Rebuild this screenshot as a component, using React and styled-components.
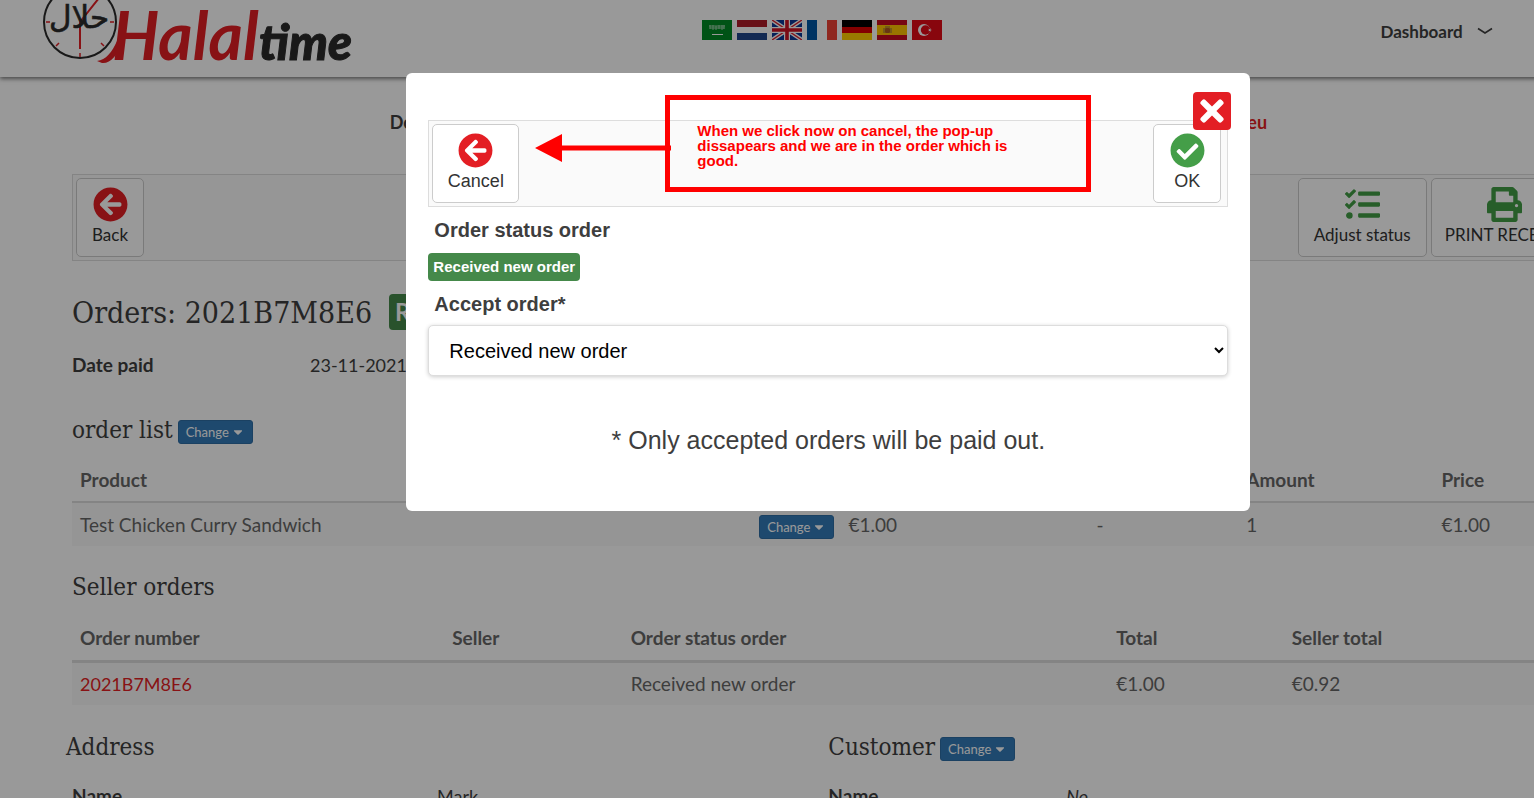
import styled, { createGlobalStyle } from "styled-components"
import { FaArrowCircleLeft, FaCaretDown, FaCheckCircle, FaPrint, FaTasks, FaTimes } from "react-icons/fa"

const GlobalStyle = createGlobalStyle`
    * {
        box-sizing: border-box;
    }
    body {
        margin: 0;
        background: #fff;
        color: #3e3e3e;
        font-family: Lato, "Open Sans", sans-serif;
        font-size: 20px;
    }
    button, select {
        font-family: inherit;
    }
`

const Viewport = styled.div`
    height: 100vh;
    overflow: hidden;
`

// the shop page is a bit wider than the window
const Page = styled.div`
    position: relative;
    width: 108%;
    min-height: 100%;
`

const Header = styled.header`
    display: grid;
    grid-template-columns: 1fr auto 1fr;
    height: 77px;
    box-shadow: 0 2px 4px rgba(0, 0, 0, 0.5);
`

const Logo = styled.a`
    display: block;
    padding-left: 40px;
    height: 77px;
    overflow: hidden;
`

const Flags = styled.div`
    display: flex;
    gap: 5px;
    padding: 20px 12px 0 0;
`

const Nav = styled.nav`
    display: flex;
    justify-content: flex-end;
    padding: 20px 164px 0 0;
`

const NavLink = styled.a`
    display: flex;
    align-items: center;
    gap: 14px;
    height: 22px;
    color: #3e3e3e;
    font-size: 17px;
    font-weight: 700;
    text-decoration: none;
`

const Main = styled.main`
    padding: 0 72px;
`

const Notice = styled.p`
    display: flex;
    justify-content: space-between;
    width: 58%;
    height: 24px;
    margin: 33px auto 40px;
    font-size: 18px;
    line-height: 24px;
    font-weight: 700;
`

const NoticeLink = styled.a`
    color: #e31e24;
    text-decoration: none;
`

const Toolbar = styled.div`
    display: flex;
    gap: 4px;
    height: 87px;
    padding: 3px 6px 3px 3px;
    border: 1px solid #ddd;
    background: #fafafa;
    font-size: ${props => props.$size || 17}px;
`

const Spacer = styled.div`
    flex: 1;
`

const ToolButton = styled.button`
    display: flex;
    flex-direction: column;
    align-items: center;
    width: ${props => props.$width || 68}px;
    height: 79px;
    padding: 8px 0 0;
    border: 1px solid #ccc;
    border-radius: 5px;
    background: #fff;
    color: #333;
    font-size: inherit;
    line-height: 26px;
    white-space: nowrap;
    svg {
        flex: none;
        font-size: 35px;
        color: ${props => props.$color};
    }
`

const Title = styled.h1`
    display: flex;
    align-items: center;
    gap: 17px;
    height: 40px;
    margin: 31px 0 0;
    font-family: "DejaVu Serif Condensed", "DejaVu Serif", serif;
    font-size: 30px;
    font-weight: 400;
`

const TitleBadge = styled.span`
    padding: 0 6px;
    border-radius: 4px;
    background: #45894a;
    color: #fff;
    font-family: Lato, sans-serif;
    font-size: 24px;
    line-height: 36px;
    font-weight: 700;
`

const Fields = styled.dl`
    display: grid;
    grid-template-columns: ${props => props.$columns};
    margin: 19px 0 0;
    line-height: 28px;
`

const Term = styled.dt`
    font-size: 19px;
    font-weight: 700;
`

const Value = styled.dd`
    margin: 0;
    font-size: 18px;
    font-style: ${props => props.$italic ? "italic" : "normal"};
`

const Subtitle = styled.h2`
    display: flex;
    align-items: center;
    gap: 5px;
    height: 32px;
    margin: ${props => props.$top}px 0 0 ${props => props.$outdent ? "-6px" : "0"};
    font-family: "DejaVu Serif Condensed", "DejaVu Serif", serif;
    font-size: 24px;
    font-weight: 400;
    button {
        margin-top: 4px;
    }
`

const ChangeButton = styled.button`
    display: inline-flex;
    align-items: center;
    gap: 2px;
    height: 24px;
    padding: 0 7px;
    border: 1px solid #2e6da4;
    border-radius: 3px;
    background: #337ab7;
    color: #fff;
    font-family: Lato, sans-serif;
    font-size: 13px;
    vertical-align: middle;
`

const Table = styled.table`
    width: 100%;
    margin-top: 12px;
    border-collapse: collapse;
    table-layout: fixed;
    color: #676767;
    text-align: left;
`

const Th = styled.th`
    width: ${props => props.$width};
    height: ${props => props.$line === 3 ? 46 : 44}px;
    padding: 0 8px;
    border-bottom: ${props => props.$line}px solid #ddd;
    font-size: 19px;
    white-space: nowrap;
`

const Td = styled.td`
    height: 44px;
    padding: 0 8px;
    background: #f9f9f9;
    font-size: 19px;
    line-height: 28px;
    white-space: nowrap;
`

const OrderLink = styled.a`
    color: #e31e24;
    font-size: 18px;
    text-decoration: none;
`

const Details = styled.div`
    display: grid;
    grid-template-columns: 1fr 1fr;
`

const Overlay = styled.div`
    position: absolute;
    inset: 0;
    display: flex;
    justify-content: center;
    align-items: flex-start;
    padding-top: 73px;
    background: rgba(0, 0, 0, 0.4);
    font-family: "Liberation Sans", Arial, sans-serif;
`

const Modal = styled.div`
    position: relative;
    width: 90%;
    max-width: 844px;
    padding: 47px 22px 55px;
    border-radius: 6px;
    background: #fff;
`

const CloseButton = styled.button`
    position: absolute;
    top: 19px;
    right: 19px;
    display: flex;
    align-items: center;
    justify-content: center;
    width: 38px;
    height: 38px;
    padding: 0;
    border: 0;
    border-radius: 4px;
    background: #e31e24;
    color: #fff;
    font-size: 34px;
`

const Label = styled.label`
    display: block;
    margin-top: 2px;
    padding: 0 6px;
    color: #3e3e3e;
    font-size: 20px;
    line-height: 42px;
    font-weight: 700;
`

const Badge = styled.span`
    display: block;
    width: fit-content;
    margin: 2px 0;
    padding: 0 5px;
    border-radius: 4px;
    background: #45894a;
    color: #fff;
    font-size: 15px;
    line-height: 28px;
    font-weight: 700;
`

const Select = styled.select`
    display: block;
    width: 100%;
    height: 51px;
    padding: 0 0 0 16px;
    border: 1px solid #ddd;
    border-radius: 5px;
    background: #fff;
    box-shadow: 0 1px 4px rgba(0, 0, 0, 0.2);
    color: #000;
    font-size: 20px;
`

const Footnote = styled.p`
    margin: 48px 0 0;
    font-size: 25px;
    line-height: 32px;
    text-align: center;
`

const Remark = styled.div`
    position: absolute;
    top: 22px;
    left: 259px;
    width: 426px;
    height: 97px;
    padding: 23px 70px 0 27px;
    border: 5px solid #f00;
    color: #f00;
    font-size: 15px;
    line-height: 15px;
    font-weight: 700;
`

const RemarkArrow = styled.svg`
    position: absolute;
    top: 61px;
    left: 129px;
`

const FLAGS = [
  { name: "Arabic", art: <><rect width="30" height="20" fill="#008a25"/><path d="M7 6h16M7.500 8h15M8 5v4M11 5v5M14 6v4M17 5v4M20 5v5M22 5v4" stroke="#fff" opacity=".6"/><path d="M10 14.500h11" stroke="#fff"/></> },
  { name: "Nederlands", art: <><rect width="30" height="20" fill="#fff"/><rect width="30" height="7" fill="#ae1c28"/><rect y="13" width="30" height="7" fill="#21468b"/></> },
  { name: "English", art: <><rect width="30" height="20" fill="#0a3896"/><path d="M0 0l30 20M30 0L0 20" stroke="#fff" strokeWidth="4"/><path d="M0 0l30 20M30 0L0 20" stroke="#d8202e" strokeWidth="1.400"/><path d="M15 0v20M0 10h30" stroke="#fff" strokeWidth="6"/><path d="M15 0v20M0 10h30" stroke="#cc1124" strokeWidth="3.600"/></> },
  { name: "Français", art: <><rect width="30" height="20" fill="#fff"/><rect width="10" height="20" fill="#0055a4"/><rect x="20" width="10" height="20" fill="#ef4135"/></> },
  { name: "Deutsch", art: <><rect width="30" height="7" fill="#000"/><rect y="7" width="30" height="6" fill="#d00"/><rect y="13" width="30" height="7" fill="#ffce00"/></> },
  { name: "Español", art: <><rect width="30" height="20" fill="#c60b1e"/><rect y="5" width="30" height="10" fill="#ffc400"/><rect x="8" y="8" width="5" height="5" rx="1" fill="#ad5a22"/><path d="M7 8v5M14 8v5M8 7h5" stroke="#8c6a4a"/></> },
  { name: "Türkçe", art: <><rect width="30" height="20" fill="#e30a17"/><circle cx="12" cy="10" r="6" fill="#fff"/><circle cx="13.500" cy="10" r="4.700" fill="#e30a17"/><path d="M20 10l-3.800 1.200 2.300-3.200v4l-2.300-3.200z" fill="#fff"/></> },
]

const LogoArt = () => (
  <svg width="320" height="77" viewBox="40 0 320 77" role="img" aria-label="Halaltime">
    <circle cx="80" cy="22" r="36" fill="none" stroke="#2b2b2b" strokeWidth="2"/>
    <path d="M46 22h4M110 22h4M80 53v4M56 46l3-3M104 46l-3-3" stroke="#e31e24" strokeWidth="1.500"/>
    <path d="M80 49V22L99 -2" fill="none" stroke="#e31e24" strokeWidth="2"/>
    <text x="79" y="28" textAnchor="middle" fontFamily="DejaVu Sans" fontSize="31" fill="#2b2b2b" stroke="#2b2b2b" strokeWidth=".6">حلال</text>
    <path d="M97 61c9-1 15-9 20-20l5 2c-4 12-12 21-20 20z" fill="#e31e24"/>
    <text x="112" y="60" fontFamily="Lato" fontSize="66" fontStyle="italic" fontWeight="700" fill="#e31e24">Halal</text>
    <text x="259" y="60" fontFamily="Lato" fontSize="49" fontStyle="italic" fontWeight="900" fill="#2b2b2b" stroke="#2b2b2b">time</text>
  </svg>
)

const Change = () => (
  <ChangeButton type="button">
    Change <FaCaretDown size={14}/>
  </ChangeButton>
)

const App = () => {
  return (
    <Viewport>
      <GlobalStyle/>
      <Page>
        <Header>
          <Logo href="#"><LogoArt/></Logo>
          <Flags>
            {FLAGS.map(flag => (
              <a href="#" key={flag.name} aria-label={flag.name}>
                <svg width="30" height="20" viewBox="0 0 30 20" display="block">{flag.art}</svg>
              </a>
            ))}
          </Flags>
          <Nav>
            <NavLink href="#">
              Dashboard
              <svg width="16" height="8" viewBox="0 0 16 8" fill="none" stroke="#3e3e3e" strokeWidth="1.600"><path d="M1 1.500l7 4.500 7-4.500"/></svg>
            </NavLink>
          </Nav>
        </Header>
        <Main>
          <Notice>
            <span>Download</span>
            <NoticeLink href="#">halaltime.eu</NoticeLink>
          </Notice>
          <Toolbar>
            <ToolButton type="button" $color="#e31e24"><FaArrowCircleLeft/>Back</ToolButton>
            <Spacer/>
            <ToolButton type="button" $width={129} $color="#419d45"><FaTasks/>Adjust status</ToolButton>
            <ToolButton type="button" $width={147} $color="#419d45"><FaPrint/>PRINT RECEIPT</ToolButton>
          </Toolbar>
          <Title>Orders: 2021B7M8E6 <TitleBadge>Received new order</TitleBadge></Title>
          <Fields $columns="238px 1fr">
            <Term>Date paid</Term>
            <Value>23-11-2021</Value>
          </Fields>
          <Subtitle $top={35}>order list <Change/></Subtitle>
          <Table>
            <thead>
              <tr>
                <Th $line={2} $width="44.9%">Product</Th>
                <Th $line={2} $width="5.9%"></Th>
                <Th $line={2} $width="16.4%"></Th>
                <Th $line={2} $width="9.9%"></Th>
                <Th $line={2} $width="12.9%">Amount</Th>
                <Th $line={2}>Price</Th>
              </tr>
            </thead>
            <tbody>
              <tr>
                <Td>Test Chicken Curry Sandwich</Td>
                <Td><Change/></Td>
                <Td>€1.00</Td>
                <Td>-</Td>
                <Td>1</Td>
                <Td>€1.00</Td>
              </tr>
            </tbody>
          </Table>
          <Subtitle $top={25}>Seller orders</Subtitle>
          <Table>
            <thead>
              <tr>
                <Th $line={3} $width="24.6%">Order number</Th>
                <Th $line={3} $width="11.8%">Seller</Th>
                <Th $line={3} $width="32.1%">Order status order</Th>
                <Th $line={3} $width="11.6%">Total</Th>
                <Th $line={3}>Seller total</Th>
              </tr>
            </thead>
            <tbody>
              <tr>
                <Td><OrderLink href="#">2021B7M8E6</OrderLink></Td>
                <Td></Td>
                <Td>Received new order</Td>
                <Td>€1.00</Td>
                <Td>€0.92</Td>
              </tr>
            </tbody>
          </Table>
          <Details>
            <section>
              <Subtitle $top={26} $outdent>Address</Subtitle>
              <Fields $columns="365px 1fr">
                <Term>Name</Term>
                <Value>Mark</Value>
              </Fields>
            </section>
            <section>
              <Subtitle $top={26}>Customer <Change/></Subtitle>
              <Fields $columns="238px 1fr">
                <Term>Name</Term>
                <Value $italic>No</Value>
              </Fields>
            </section>
          </Details>
        </Main>
        <Overlay>
          <Modal role="dialog" aria-label="Order status order">
            <Toolbar $size={18}>
              <ToolButton type="button" $width={87} $color="#e31e24"><FaArrowCircleLeft/>Cancel</ToolButton>
              <Spacer/>
              <ToolButton type="button" $color="#449e48"><FaCheckCircle/>OK</ToolButton>
            </Toolbar>
            <Label as="div">Order status order</Label>
            <Badge>Received new order</Badge>
            <Label htmlFor="status">Accept order*</Label>
            <Select id="status" defaultValue="received">
              <option value="received">Received new order</option>
            </Select>
            <Footnote>* Only accepted orders will be paid out.</Footnote>
            <CloseButton type="button" aria-label="Close"><FaTimes/></CloseButton>
            <Remark>When we click now on cancel, the pop-up dissapears and we are in the order which is good.</Remark>
            <RemarkArrow width="136" height="28" viewBox="0 0 136 28" fill="#f00">
              <path d="M0 14L27 0v11.500h109v5H27V28z"/>
            </RemarkArrow>
          </Modal>
        </Overlay>
      </Page>
    </Viewport>
  )
}

export default App
